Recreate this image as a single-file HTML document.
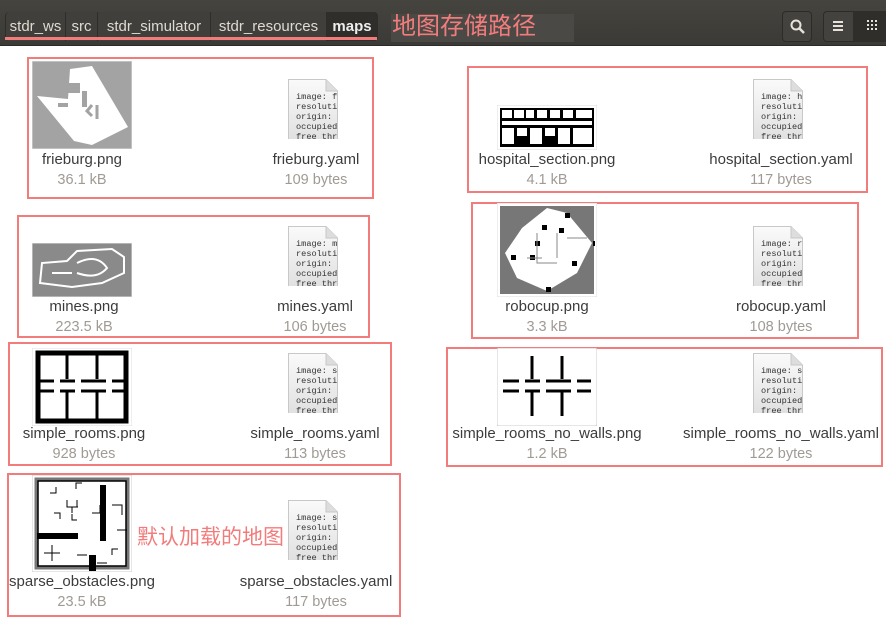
<!DOCTYPE html>
<html><head><meta charset="utf-8"><style>
*{margin:0;padding:0;box-sizing:border-box}
body{width:886px;height:624px;background:#fff;position:relative;overflow:hidden;font-family:"Liberation Sans","Noto Sans CJK SC",sans-serif}
.hdr{position:absolute;left:0;top:0;width:886px;height:46px;background:linear-gradient(#45443f,#3b3a36);border-bottom:1px solid #2a2a28}
.bc{position:absolute;top:12px;height:29px;color:#dfdbd2;font-size:15px;line-height:29px;text-align:center;border-right:1px solid #2e2d2a;background:#403f3b}
.red{border:2px solid #f27c7c;position:absolute}
.a{position:absolute}
.n{position:absolute;font-size:15px;color:#3c3c3c;text-align:center;width:240px;white-space:nowrap}
.s{position:absolute;font-size:14.5px;color:#a09a94;text-align:center;width:200px}
.doc{position:absolute;width:50px;height:60px}
</style></head><body>
<div class="hdr">
<div class="bc" style="left:5px;width:61px;border-left:1px solid #2e2d2a;border-radius:4px 0 0 4px">stdr_ws</div>
<div class="bc" style="left:66px;width:32px">src</div>
<div class="bc" style="left:98px;width:113px">stdr_simulator</div>
<div class="bc" style="left:211px;width:116px">stdr_resources</div>
<div class="bc" style="left:327px;width:51px;background:#2f2e2b;font-weight:bold;color:#eee;border-radius:0 4px 4px 0">maps</div>
<div class="a" style="left:5px;top:37px;width:372px;height:3px;background:#f27c7c"></div>
<div class="a" style="left:391px;top:14px;width:183px;height:28px;background:#4a4945"></div>
<div class="a" style="left:392px;top:12px;font-size:24px;color:#f27c7c;line-height:30px">地图存储路径</div>
<div class="a" style="left:782px;top:11px;width:30px;height:31px;border:1px solid #2c2b28;border-radius:4px;background:#43423e"></div>
<svg class="a" style="left:789px;top:18px" width="18" height="18"><circle cx="7" cy="7" r="4.5" stroke="#e6e2da" stroke-width="2" fill="none"/><line x1="10.5" y1="10.5" x2="15" y2="15" stroke="#e6e2da" stroke-width="2.5"/></svg>
<div class="a" style="left:823px;top:11px;width:63px;height:31px;border:1px solid #2c2b28;border-radius:4px 0 0 4px;background:#43423e"></div>
<div class="a" style="left:853px;top:11px;width:33px;height:31px;background:#2f2e2b"></div>
<svg class="a" style="left:832px;top:19px" width="14" height="14"><rect x="1" y="2" width="10" height="2" fill="#e6e2da"/><rect x="1" y="6" width="10" height="2" fill="#e6e2da"/><rect x="1" y="10" width="10" height="2" fill="#e6e2da"/></svg>
<svg class="a" style="left:867px;top:20px" width="12" height="12"><g fill="#e6e2da"><rect x="0" y="0" width="2" height="2"/><rect x="4" y="0" width="2" height="2"/><rect x="8" y="0" width="2" height="2"/><rect x="0" y="4" width="2" height="2"/><rect x="4" y="4" width="2" height="2"/><rect x="8" y="4" width="2" height="2"/><rect x="0" y="8" width="2" height="2"/><rect x="4" y="8" width="2" height="2"/><rect x="8" y="8" width="2" height="2"/></g></svg>
</div>

<div class="red" style="left:27px;top:57px;width:347px;height:142px"></div>
<div class="red" style="left:467px;top:66px;width:401px;height:127px"></div>
<div class="red" style="left:17px;top:215px;width:353px;height:123px"></div>
<div class="red" style="left:471px;top:202px;width:388px;height:137px"></div>
<div class="red" style="left:8px;top:342px;width:384px;height:124px"></div>
<div class="red" style="left:446px;top:347px;width:437px;height:120px"></div>
<div class="red" style="left:7px;top:473px;width:394px;height:144px"></div>

<svg class="a" style="left:32px;top:61px" width="100" height="88"><rect width="100" height="88" fill="#a3a3a3" stroke="#ddd"/><polygon points="5,35 36,38 38,8 60,5 96,66 60,84 42,80" fill="#fff"/><rect x="36" y="22" width="12" height="10" fill="#a3a3a3"/><rect x="26" y="42" width="10" height="4" fill="#a3a3a3"/><rect x="50" y="30" width="5" height="16" fill="#a3a3a3"/><path d="M60 44 l-5 6 5 5 M65 44 v14" stroke="#a3a3a3" stroke-width="3" fill="none"/></svg>
<svg class="a" style="left:497px;top:105px" width="100" height="45"><rect width="100" height="45" fill="#fff" stroke="#ddd"/><rect x="3" y="3" width="94" height="39" fill="#000"/><g fill="#fff"><rect x="5" y="5" width="10" height="8"/><rect x="17" y="5" width="10" height="8"/><rect x="29" y="5" width="8" height="8"/><rect x="40" y="5" width="10" height="8"/><rect x="53" y="5" width="10" height="8"/><rect x="66" y="5" width="10" height="8"/><rect x="79" y="5" width="16" height="8"/><rect x="5" y="16" width="90" height="4"/><rect x="5" y="23" width="12" height="16"/><rect x="20" y="23" width="10" height="8"/><rect x="33" y="23" width="12" height="16"/><rect x="48" y="23" width="10" height="8"/><rect x="61" y="23" width="12" height="16"/><rect x="76" y="23" width="19" height="16"/></g></svg>
<svg class="a" style="left:32px;top:243px" width="100" height="54"><rect width="100" height="54" fill="#8a8a8a" stroke="#ddd"/><path d="M8 40 L10 20 L35 18 L45 8 L80 6 L92 14 L92 30 L70 40 L40 44 Z" fill="none" stroke="#fff" stroke-width="2"/><path d="M45 20 q20 -10 30 5 q-10 12 -30 5 M20 30 l20 0" stroke="#fff" stroke-width="2" fill="none"/></svg>
<svg class="a" style="left:497px;top:203px" width="100" height="94"><rect width="100" height="94" fill="#fff" stroke="#ddd"/><rect x="3" y="3" width="94" height="88" fill="#777"/><polygon points="50,5 70,10 95,40 80,70 50,88 20,75 8,50 25,25" fill="#fff"/><g fill="#000"><rect x="68" y="10" width="5" height="5"/><rect x="45" y="22" width="5" height="5"/><rect x="62" y="25" width="5" height="5"/><rect x="38" y="38" width="5" height="5"/><rect x="96" y="38" width="2" height="5"/><rect x="14" y="52" width="5" height="5"/><rect x="33" y="52" width="5" height="5"/><rect x="75" y="58" width="5" height="5"/><rect x="49" y="84" width="5" height="5"/></g><path d="M40 30v30h20M60 30v25M30 55h15M70 35h20" stroke="#888" fill="none"/></svg>
<svg class="a" style="left:32px;top:348px" width="100" height="78"><rect width="100" height="78" fill="#fff" stroke="#ddd"/><rect x="6" y="5" width="88" height="68" fill="none" stroke="#000" stroke-width="5"/><g stroke="#000" stroke-width="3"><line x1="35" y1="5" x2="35" y2="31"/><line x1="65" y1="5" x2="65" y2="31"/><line x1="35" y1="44" x2="35" y2="73"/><line x1="65" y1="44" x2="65" y2="73"/><line x1="6" y1="33" x2="22" y2="33"/><line x1="28" y1="33" x2="43" y2="33"/><line x1="49" y1="33" x2="74" y2="33"/><line x1="80" y1="33" x2="94" y2="33"/><line x1="6" y1="43" x2="22" y2="43"/><line x1="28" y1="43" x2="43" y2="43"/><line x1="49" y1="43" x2="74" y2="43"/><line x1="80" y1="43" x2="94" y2="43"/></g></svg>
<svg class="a" style="left:497px;top:348px" width="100" height="78"><rect width="100" height="78" fill="#fff" stroke="#ccc" rx="2"/><g stroke="#000" stroke-width="3"><line x1="35" y1="8" x2="35" y2="31"/><line x1="65" y1="8" x2="65" y2="31"/><line x1="35" y1="44" x2="35" y2="68"/><line x1="65" y1="44" x2="65" y2="68"/><line x1="6" y1="33" x2="22" y2="33"/><line x1="28" y1="33" x2="43" y2="33"/><line x1="49" y1="33" x2="74" y2="33"/><line x1="80" y1="33" x2="94" y2="33"/><line x1="6" y1="43" x2="22" y2="43"/><line x1="28" y1="43" x2="43" y2="43"/><line x1="49" y1="43" x2="74" y2="43"/><line x1="80" y1="43" x2="94" y2="43"/></g></svg>
<svg class="a" style="left:32px;top:475px" width="100" height="97"><rect width="100" height="97" fill="#fff" stroke="#ccc"/><rect x="4" y="4" width="92" height="89" fill="none" stroke="#777" stroke-width="3"/><rect x="6" y="6" width="88" height="85" fill="none" stroke="#000" stroke-width="1.5"/><g fill="#000"><rect x="5" y="58" width="41" height="6"/><rect x="68" y="10" width="6" height="56"/><rect x="57" y="80" width="7" height="16"/></g><g stroke="#000" fill="none" stroke-width="1"><path d="M18 18h6v-6M35 25v7h10v-7M22 38h6v6M40 38v-6h6M45 45h-5v-6M60 38h8v-8M12 78h16M20 70v16M45 80h10M80 30h10v10M85 55h10M80 80v-6h6M50 8h-6v6M75 88h-10"/></g></svg>

<svg width="0" height="0" style="position:absolute"><defs><linearGradient id="g" x1="0" y1="0" x2="0" y2="1"><stop offset="0" stop-color="#fafafa"/><stop offset="1" stop-color="#e0e0e0"/></linearGradient></defs></svg>
<div id="docs"></div>
<script>
var ds=[[288,79,"f"],[753,79,"h"],[288,226,"m"],[753,226,"r"],[288,353,"s"],[753,353,"s"],[288,500,"s"]];
var h="";
ds.forEach(function(d){h+='<svg class="doc" style="left:'+d[0]+'px;top:'+d[1]+'px" width="50" height="62"><path d="M0.5 0.5H38L49.5 12V61.5H0.5Z" fill="url(#g)" stroke="#c8c8c8"/><path d="M38 0.5V12H49.5" fill="#ddd" stroke="#c8c8c8"/><g font-family="Liberation Mono,monospace" font-size="8.6" fill="#333"><text x="8" y="20">image: '+d[2]+'</text><text x="8" y="30">resoluti</text><text x="8" y="40">origin:</text><text x="8" y="50">occupied</text><text x="8" y="60">free_thr</text></g></svg>';});
document.getElementById("docs").innerHTML=h;
</script>

<div class="n" style="left:-38px;top:151px">frieburg.png</div><div class="s" style="left:-18px;top:172px">36.1 kB</div>
<div class="n" style="left:196px;top:151px">frieburg.yaml</div><div class="s" style="left:216px;top:172px">109 bytes</div>
<div class="n" style="left:427px;top:151px">hospital_section.png</div><div class="s" style="left:447px;top:172px">4.1 kB</div>
<div class="n" style="left:661px;top:151px">hospital_section.yaml</div><div class="s" style="left:681px;top:172px">117 bytes</div>
<div class="n" style="left:-36px;top:298px">mines.png</div><div class="s" style="left:-16px;top:319px">223.5 kB</div>
<div class="n" style="left:195px;top:298px">mines.yaml</div><div class="s" style="left:215px;top:319px">106 bytes</div>
<div class="n" style="left:427px;top:298px">robocup.png</div><div class="s" style="left:447px;top:319px">3.3 kB</div>
<div class="n" style="left:661px;top:298px">robocup.yaml</div><div class="s" style="left:681px;top:319px">108 bytes</div>
<div class="n" style="left:-36px;top:425px">simple_rooms.png</div><div class="s" style="left:-16px;top:446px">928 bytes</div>
<div class="n" style="left:195px;top:425px">simple_rooms.yaml</div><div class="s" style="left:215px;top:446px">113 bytes</div>
<div class="n" style="left:427px;top:425px">simple_rooms_no_walls.png</div><div class="s" style="left:447px;top:446px">1.2 kB</div>
<div class="n" style="left:661px;top:425px">simple_rooms_no_walls.yaml</div><div class="s" style="left:681px;top:446px">122 bytes</div>
<div class="n" style="left:-38px;top:573px">sparse_obstacles.png</div><div class="s" style="left:-18px;top:594px">23.5 kB</div>
<div class="n" style="left:196px;top:573px">sparse_obstacles.yaml</div><div class="s" style="left:216px;top:594px">117 bytes</div>
<div class="a" style="left:137px;top:521px;font-size:21px;color:#f27c7c">默认加载的地图</div>
</body></html>
